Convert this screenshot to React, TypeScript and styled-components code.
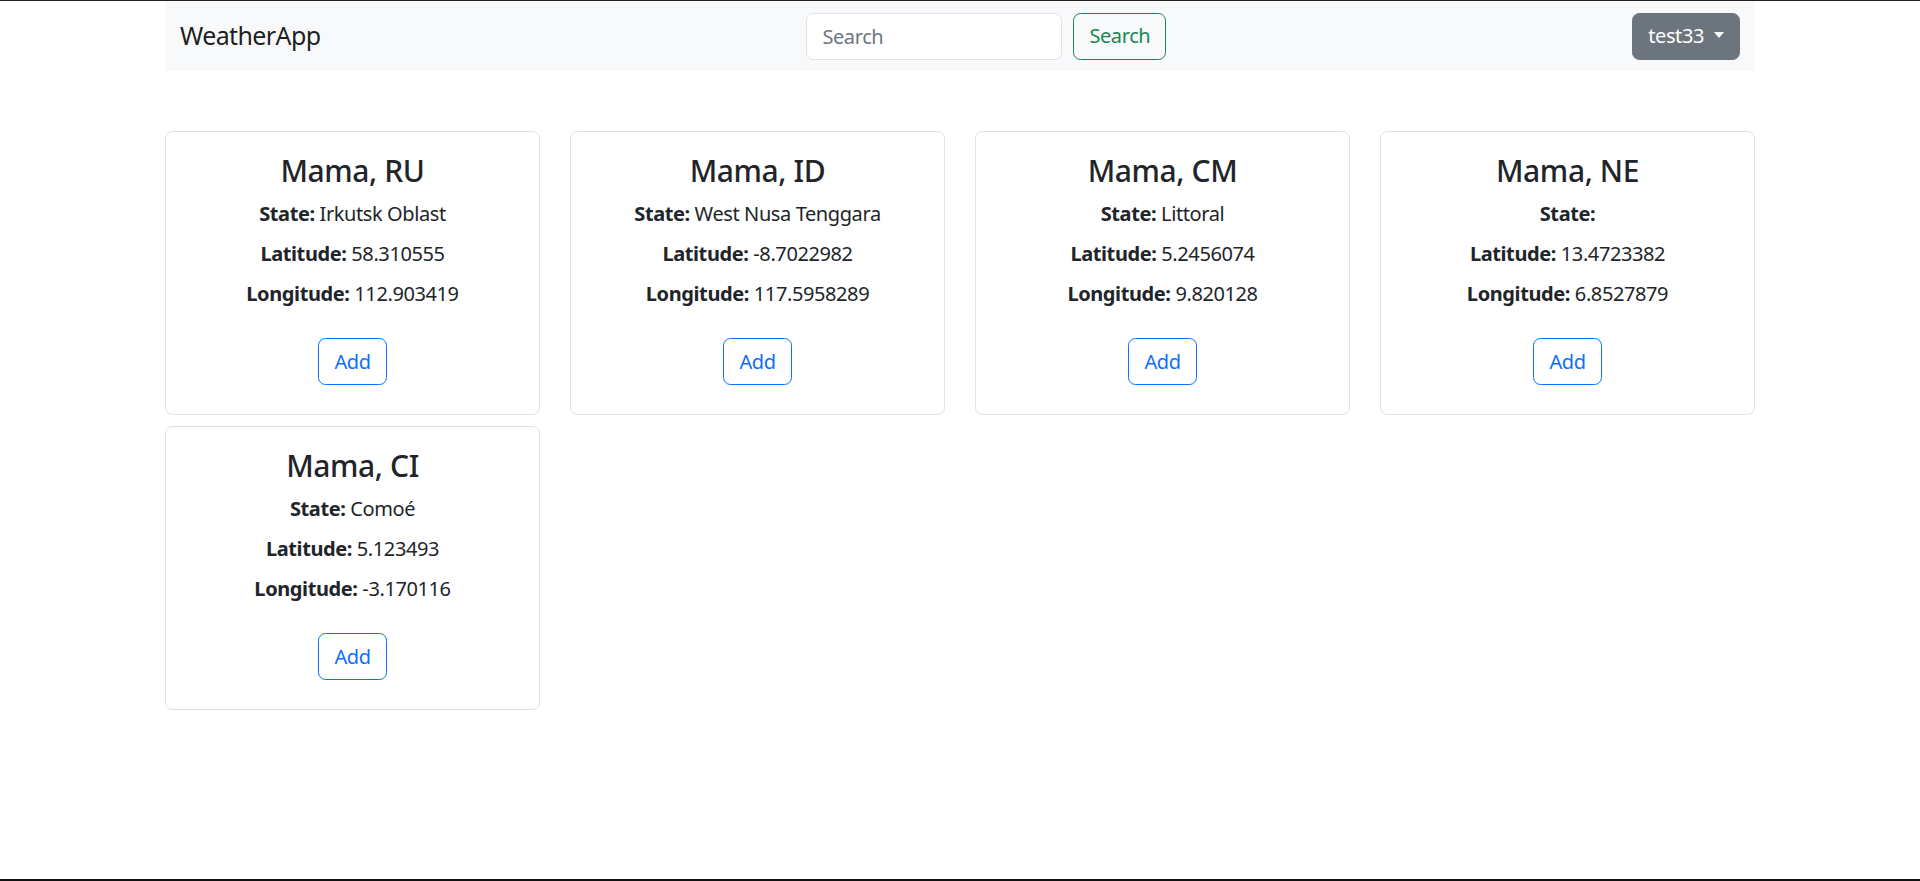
import React from "react";
import styled, { createGlobalStyle } from "styled-components";

const GlobalStyle = createGlobalStyle`
  *, *::before, *::after { box-sizing: border-box; }
  html, body { margin: 0; padding: 0; }
  body {
    font-family: "Noto Sans", "Open Sans", sans-serif;
    font-size: 20px;
    line-height: 1.5;
    letter-spacing: -0.4px;
    color: #212529;
    background: #fff;
  }
`;

const Frame = styled.div`
  height: 100vh;
  border-top: 1px solid #222;
  border-bottom: 2px solid #111;
  overflow: hidden;
`;

const Container = styled.div`
  width: 1590px;
  margin: 0 auto;
`;

const Navbar = styled.nav`
  height: 70px;
  background: #f8f9fa;
  display: flex;
  align-items: center;
  justify-content: space-between;
  padding: 10px 15px;
`;

const Brand = styled.a`
  font-size: 25px;
  line-height: 1.5;
  letter-spacing: -0.6px;
  color: rgba(0, 0, 0, 0.9);
  text-decoration: none;
  margin-right: 20px;
`;

const SearchForm = styled.form`
  display: flex;
  align-items: center;
  gap: 11px;
`;

const SearchInput = styled.input`
  width: 256px;
  height: 47px;
  padding: 7.5px 15px;
  font-family: inherit;
  font-size: 20px;
  line-height: 1.5;
  letter-spacing: -0.4px;
  color: #212529;
  background: #fff;
  border: 1px solid #dee2e6;
  border-radius: 7.5px;
  outline: none;
  &::placeholder { color: #6c757d; opacity: 1; }
`;

const Button = styled.button<{ $variant: "success" | "primary" | "secondary" }>`
  height: 47px;
  padding: 7.5px 15px;
  font-family: inherit;
  font-size: 20px;
  line-height: 1.5;
  letter-spacing: -0.4px;
  font-weight: 400;
  border-radius: 7.5px;
  cursor: pointer;
  display: inline-flex;
  align-items: center;
  ${({ $variant }) =>
    $variant === "success"
      ? `color: #198754; border: 1px solid #198754; background: transparent;`
      : $variant === "primary"
      ? `color: #0d6efd; border: 1px solid #0d6efd; background: transparent;`
      : `color: #fff; border: 1px solid #6c757d; background: #6c757d;`}
`;

const Caret = styled.span`
  display: inline-block;
  margin-left: 10px;
  width: 0;
  height: 0;
  border-top: 6px solid #fff;
  border-left: 5.5px solid transparent;
  border-right: 5.5px solid transparent;
  margin-top: -2px;
`;

const Grid = styled.div`
  margin-top: 60px;
  display: grid;
  grid-template-columns: repeat(4, 1fr);
  column-gap: 30px;
  row-gap: 11px;
  align-items: start;
`;

const Card = styled.div`
  border: 1px solid #dee2e6;
  border-radius: 7.5px;
  padding: 21px 20px 20px;
  text-align: center;
  background: #fff;
`;

const Title = styled.h4`
  margin: 0 0 10px;
  font-size: 30px;
  line-height: 36px;
  font-weight: 500;
  letter-spacing: -0.4px;
`;

const Info = styled.p`
  margin: 0 0 10px;
  line-height: 30px;
`;

const Label = styled.strong`
  font-weight: 700;
`;

const Actions = styled.div`
  margin: 29px 0 9px;
  display: flex;
  justify-content: center;
`;

type City = { name: string; state: string; lat: string; lon: string };

const cities: City[] = [
  { name: "Mama, RU", state: "Irkutsk Oblast", lat: "58.310555", lon: "112.903419" },
  { name: "Mama, ID", state: "West Nusa Tenggara", lat: "-8.7022982", lon: "117.5958289" },
  { name: "Mama, CM", state: "Littoral", lat: "5.2456074", lon: "9.820128" },
  { name: "Mama, NE", state: "", lat: "13.4723382", lon: "6.8527879" },
  { name: "Mama, CI", state: "Comoé", lat: "5.123493", lon: "-3.170116" },
];

export default function App() {
  return (
    <Frame>
      <GlobalStyle />
      <Container>
        <Navbar>
          <Brand href="#">WeatherApp</Brand>
          <SearchForm onSubmit={(e) => e.preventDefault()}>
            <SearchInput placeholder="Search" />
            <Button $variant="success" type="submit">Search</Button>
          </SearchForm>
          <Button $variant="secondary" type="button">
            test33
            <Caret />
          </Button>
        </Navbar>
        <Grid>
          {cities.map((c) => (
            <Card key={c.name}>
              <Title>{c.name}</Title>
              <Info>
                <Label>State:</Label> {c.state}
              </Info>
              <Info>
                <Label>Latitude:</Label> {c.lat}
              </Info>
              <Info>
                <Label>Longitude:</Label> {c.lon}
              </Info>
              <Actions>
                <Button $variant="primary" type="button">Add</Button>
              </Actions>
            </Card>
          ))}
        </Grid>
      </Container>
    </Frame>
  );
}
